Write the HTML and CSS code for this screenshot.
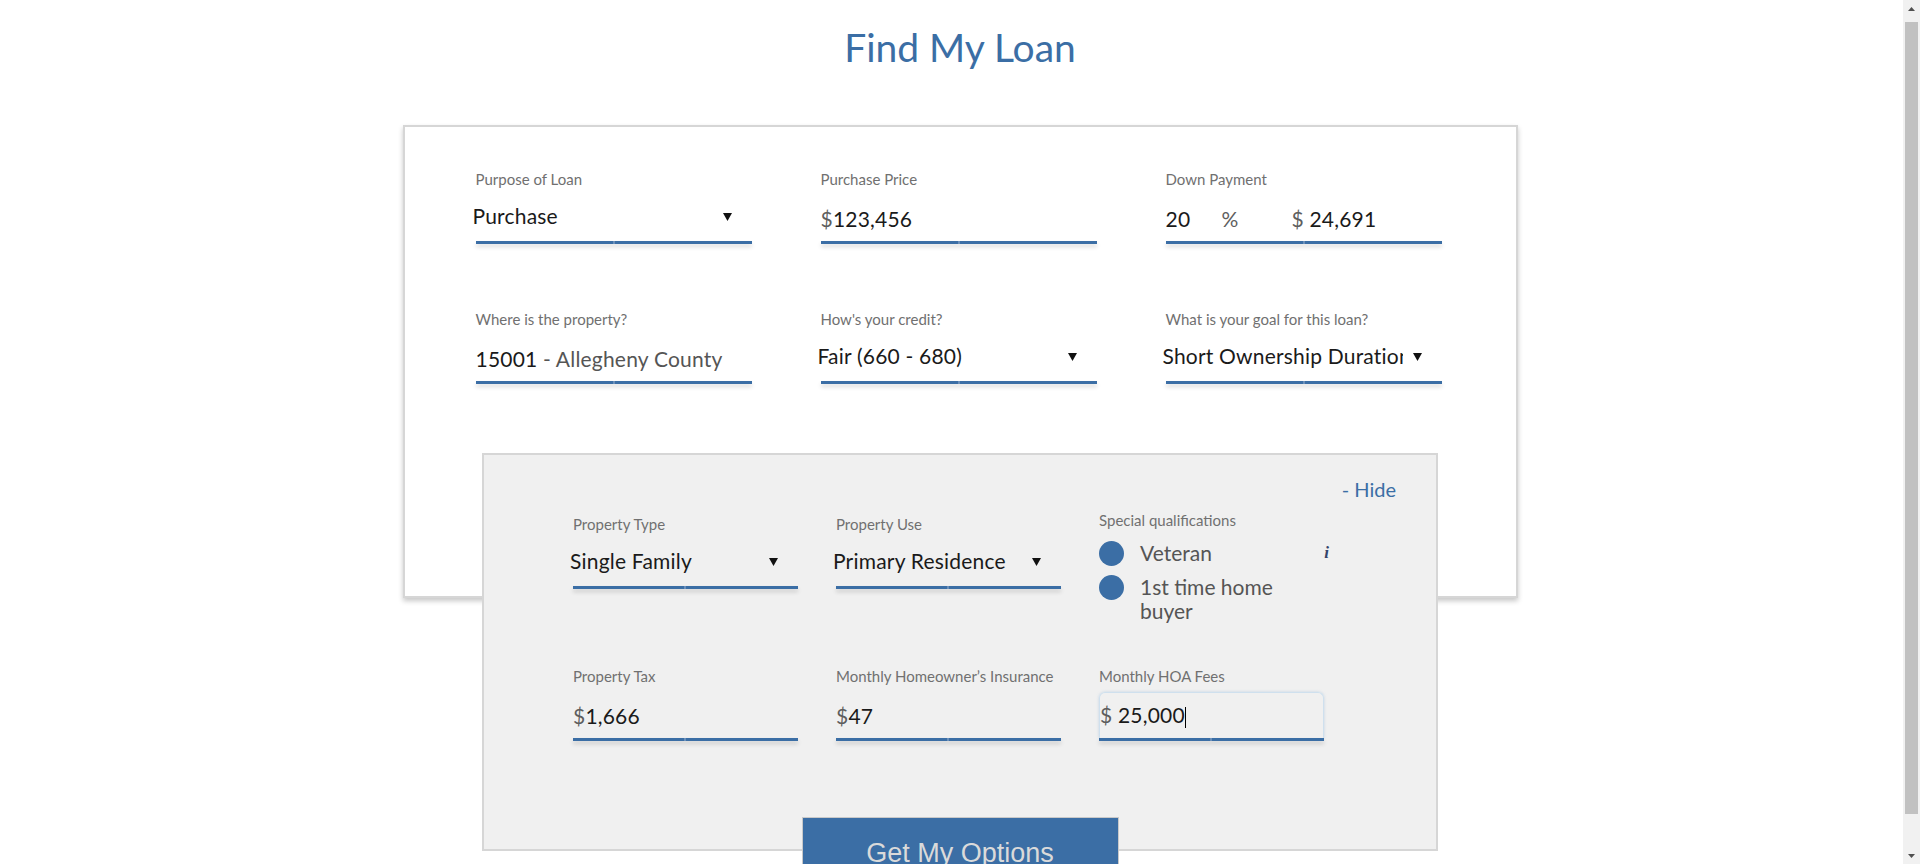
FILE: index.html
```html
<!DOCTYPE html>
<html lang="en">
<head>
<meta charset="utf-8">
<title>Find My Loan</title>
<link rel="stylesheet" href="styles.css">
</head>
<body>
<div class="page">
  <h1 class="title">Find My Loan</h1>

  <section class="card">
    <div class="grid">
      <div class="field">
        <div class="label">Purpose of Loan</div>
        <div class="control select"><span class="value">Purchase</span><svg class="arrow" width="9" height="8" viewBox="0 0 9 8"><polygon points="0,0 9,0 4.5,8"/></svg></div>
        <div class="line"></div>
      </div>
      <div class="field">
        <div class="label">Purchase Price</div>
        <div class="control"><span class="value"><span class="cur">$</span>123,456</span></div>
        <div class="line"></div>
      </div>
      <div class="field">
        <div class="label">Down Payment</div>
        <div class="control"><span class="pct">20</span><span class="pct-sign">%</span><span class="value"><span class="cur">$</span> 24,691</span></div>
        <div class="line"></div>
      </div>
      <div class="field">
        <div class="label">Where is the property?</div>
        <div class="control"><span class="value">15001 <span class="muted">- Allegheny County</span></span></div>
        <div class="line"></div>
      </div>
      <div class="field">
        <div class="label">How's your credit?</div>
        <div class="control select"><span class="value">Fair (660 - 680)</span><svg class="arrow" width="9" height="8" viewBox="0 0 9 8"><polygon points="0,0 9,0 4.5,8"/></svg></div>
        <div class="line"></div>
      </div>
      <div class="field">
        <div class="label">What is your goal for this loan?</div>
        <div class="control select"><span class="value">Short Ownership Duration</span><svg class="arrow" width="9" height="8" viewBox="0 0 9 8"><polygon points="0,0 9,0 4.5,8"/></svg></div>
        <div class="line"></div>
      </div>
    </div>
  </section>

  <section class="panel">
    <div class="hide-row"><a class="hide">- Hide</a></div>
    <div class="panel-grid">
      <div class="field">
        <div class="label">Property Type</div>
        <div class="control select"><span class="value">Single Family</span><svg class="arrow" width="9" height="8" viewBox="0 0 9 8"><polygon points="0,0 9,0 4.5,8"/></svg></div>
        <div class="line"></div>
      </div>
      <div class="field">
        <div class="label">Property Use</div>
        <div class="control select"><span class="value">Primary Residence</span><svg class="arrow" width="9" height="8" viewBox="0 0 9 8"><polygon points="0,0 9,0 4.5,8"/></svg></div>
        <div class="line"></div>
      </div>
      <div class="quals">
        <div class="label">Special qualifications</div>
        <div class="options">
          <div class="option"><span class="dot"></span><span class="opt-text">Veteran</span><span class="info">i</span></div>
          <div class="option"><span class="dot"></span><span class="opt-text">1st time home buyer</span></div>
        </div>
      </div>
      <div class="field">
        <div class="label">Property Tax</div>
        <div class="control"><span class="value"><span class="cur">$</span>1,666</span></div>
        <div class="line"></div>
      </div>
      <div class="field">
        <div class="label">Monthly Homeowner’s Insurance</div>
        <div class="control"><span class="value"><span class="cur">$</span>47</span></div>
        <div class="line"></div>
      </div>
      <div class="field focused">
        <div class="label">Monthly HOA Fees</div>
        <div class="control"><span class="value"><span class="cur">$</span> 25,000<span class="cursor"></span></span></div>
        <div class="line"></div>
      </div>
    </div>
  </section>

  <button class="cta" type="button">Get My Options</button>
</div>

<div class="scrollbar" aria-hidden="true">
  <div class="sb-btn"><svg width="7" height="4" viewBox="0 0 7 4"><polygon points="0,4 7,4 3.5,0"/></svg></div>
  <div class="sb-thumb"></div>
  <div class="sb-btn"><svg width="7" height="4" viewBox="0 0 7 4"><polygon points="0,0 7,0 3.5,4"/></svg></div>
</div>
</body>
</html>
```

FILE: styles.css
```css
* { box-sizing: border-box; }

html { overflow-x: hidden; }

body {
  margin: 0;
  background: #ffffff;
  color: #1a1a1a;
  font-family: Lato, "Open Sans", "Liberation Sans", sans-serif;
}

.page {
  width: 100vw;
  padding: 24px 0 40px;
  display: flex;
  flex-direction: column;
  align-items: center;
}

.title {
  margin: 0;
  font-size: 39px;
  line-height: 47px;
  font-weight: 400;
  color: #3b6ea5;
}

.card {
  width: 1115px;
  height: 473px;
  margin-top: 54px;
  padding: 43px 0 0 71px;
  background: #ffffff;
  border: 2px solid #d6d6d6;
  box-shadow: 0 3px 5px rgba(0, 0, 0, 0.22);
}

.grid {
  display: grid;
  grid-template-columns: repeat(3, 276px);
  column-gap: 69px;
  row-gap: 66px;
}

.field {
  display: flex;
  flex-direction: column;
}

.label {
  font-size: 15px;
  line-height: 18px;
  color: #707070;
  white-space: nowrap;
}

.control {
  height: 53px;
  display: flex;
  align-items: flex-end;
  padding-bottom: 10px;
  font-size: 21px;
  line-height: 24px;
  letter-spacing: 0.2px;
  color: #1a1a1a;
  white-space: nowrap;
}

.control.select {
  padding-bottom: 13px;
  padding-right: 20px;
}

.select .value {
  flex: 1;
  min-width: 0;
  overflow: hidden;
  margin-left: -3px;
}

.arrow {
  flex: none;
  margin-left: 10px;
  margin-bottom: 7px;
  fill: #111111;
}

.cur { color: #5e5e5e; }
.muted { color: #555555; }

.pct { width: 56px; }
.pct-sign { width: 70px; color: #5e5e5e; }

.line {
  height: 3px;
  background: linear-gradient(90deg, #3b6ea5 calc(50% - 1px), #6a8fba calc(50% - 1px), #6a8fba calc(50% + 1px), #3b6ea5 calc(50% + 1px));
  box-shadow: 0 3px 4px rgba(0, 0, 0, 0.16);
}

.panel {
  width: 956px;
  height: 398px;
  margin-top: -145px;
  padding: 22px 40px 0 89px;
  background: #f0f0f0;
  border: 2px solid #d6d6d6;
}

.hide-row {
  display: flex;
  justify-content: flex-end;
  font-size: 20px;
  line-height: 24px;
}

.hide { color: #3b6ea5; cursor: pointer; }

.panel-grid {
  margin-top: 14px;
  display: grid;
  grid-template-columns: repeat(3, 225px);
  grid-template-rows: 74px 74px;
  column-gap: 38px;
  row-gap: 78px;
}

.quals {
  width: 230px;
  margin-top: -4px;
}

.options {
  margin-top: 12px;
  display: flex;
  flex-direction: column;
  gap: 9px;
}

.option {
  display: flex;
  align-items: flex-start;
  gap: 16px;
  font-size: 21px;
  line-height: 24px;
  color: #555555;
}

.dot {
  flex: none;
  width: 25px;
  height: 25px;
  border-radius: 50%;
  background: #3b6ea5;
}

.opt-text { max-width: 150px; }

.info {
  margin-left: auto;
  font-family: "Liberation Serif", "DejaVu Serif", serif;
  font-style: italic;
  font-weight: 700;
  font-size: 17px;
  color: #34446a;
}

.focused .control {
  margin-top: 7px;
  height: 46px;
  border: 1px solid #cfe0ee;
  border-bottom: 0;
  border-radius: 6px 6px 0 0;
  box-shadow: 0 0 3px rgba(110, 160, 210, 0.35);
}

.cursor {
  display: inline-block;
  width: 1px;
  height: 21px;
  background: #000000;
  vertical-align: -5px;
}

.cta {
  display: block;
  width: 317px;
  height: 72px;
  margin-top: -34px;
  padding: 0;
  background: #3b6ea5;
  border: 1px solid #c9c9c9;
  color: #dadada;
  font-family: "Liberation Sans", Arial, sans-serif;
  font-size: 27px;
  line-height: 70px;
}

.scrollbar {
  position: fixed;
  top: 0;
  right: 0;
  width: 17px;
  height: 100vh;
  display: flex;
  flex-direction: column;
  background: #f1f1f1;
}

.sb-btn {
  flex: none;
  height: 17px;
  display: flex;
  align-items: center;
  justify-content: center;
  fill: #505050;
}

.sb-thumb {
  flex: 1;
  margin: 5px 2px 33px;
  background: #c1c1c1;
}
```
